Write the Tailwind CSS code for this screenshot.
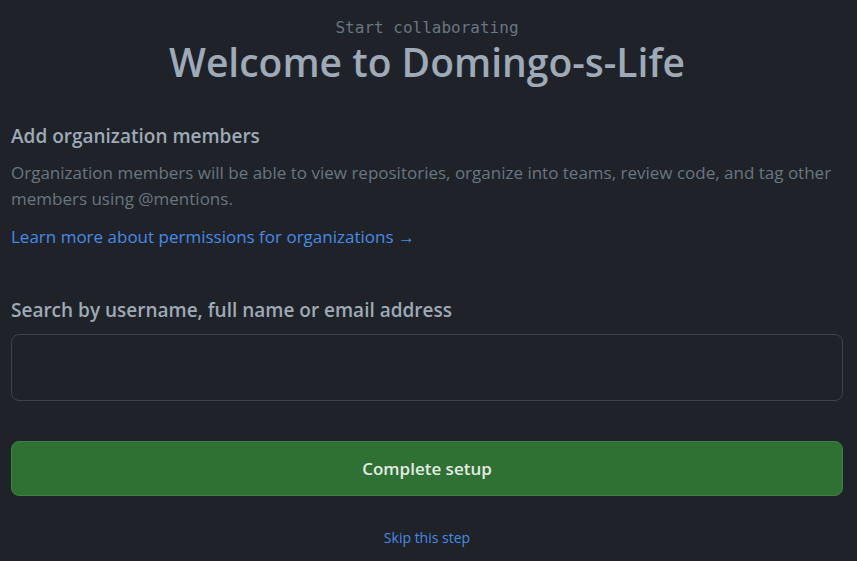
<!DOCTYPE html>
<html lang="en">
<head>
<meta charset="utf-8">
<title>Welcome to Domingo-s-Life</title>
<script src="https://cdn.jsdelivr.net/npm/@tailwindcss/browser@4"></script>
</head>
<body class="min-h-screen bg-[#1f2228] font-['Segoe_UI','Open_Sans',sans-serif] text-[#9daab7]">
<main class="pl-[11px] pr-[14px] pt-4">
  <header class="text-center">
    <p class="font-['DejaVu_Sans_Mono',monospace] text-base leading-6 text-[#6a7681]">Start collaborating</p>
    <h1 class="text-[39px] leading-[44px] font-semibold">Welcome to Domingo-s-Life</h1>
  </header>
  <section class="mt-9">
    <h2 class="text-[19px] leading-8 font-semibold">Add organization members</h2>
    <p class="mt-2 text-[17px] leading-[26px] text-[#6a7681]">Organization members will be able to view repositories, organize into teams, review code, and tag other members using @mentions.</p>
    <p class="mt-3 text-[17px] leading-[26px]"><a href="#" class="text-[#478be6]">Learn more about permissions for organizations →</a></p>
  </section>
  <form class="mt-11">
    <label for="search" class="block text-[19px] leading-8 font-semibold">Search by username, full name or email address</label>
    <input id="search" type="text" class="mt-2 block h-[67px] w-full rounded-lg border border-[#3d434b] bg-transparent px-4">
    <button type="submit" class="mt-10 block h-[55px] w-full rounded-lg border border-[#417e43] bg-[#2e7133] text-[17px] font-semibold text-[#e4ebe4]">Complete setup</button>
  </form>
  <p class="mt-8 text-center text-sm leading-5"><a href="#" class="text-[#478be6]">Skip this step</a></p>
</main>
</body>
</html>
